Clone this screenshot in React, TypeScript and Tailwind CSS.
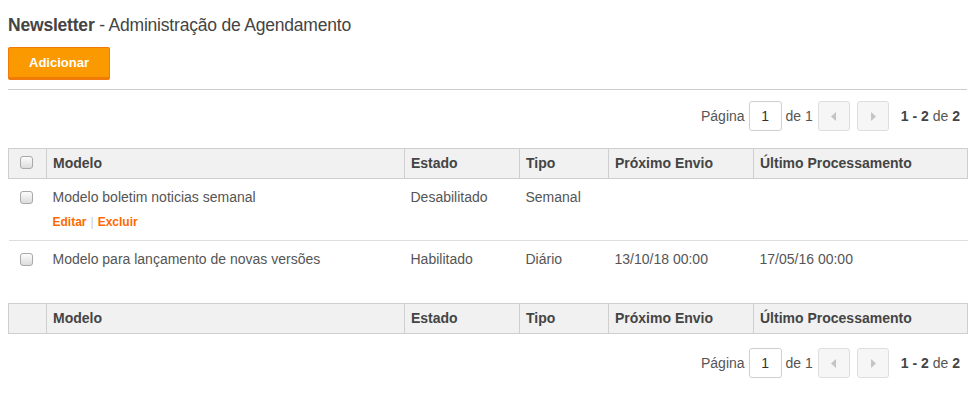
import React from 'react';

const font = { fontFamily: '"Liberation Sans", Arial, sans-serif' };

function Checkbox() {
  return (
    <span className="inline-block h-[13px] w-[13px] rounded-[3px] border border-[#a9a9a9] bg-gradient-to-b from-[#fcfcfc] to-[#dcdcdc]" />
  );
}

function Pager() {
  return (
    <div className="flex items-center justify-end pr-[7px] text-[14px] text-[#555]">
      <span>Página</span>
      <span className="ml-[4px] flex h-[30px] w-[33px] items-center justify-center rounded-[3px] border border-[#cfcfcf] bg-white text-[#333]">
        1
      </span>
      <span className="ml-[4px]">de 1</span>
      <button className="ml-[5px] flex h-[30px] w-[32px] items-center justify-center rounded-[3px] border border-[#dedede] bg-[#f6f6f6]">
        <svg width="6" height="9" viewBox="0 0 6 9"><path d="M5 0 L0 4.5 L5 9 Z" fill="#c4c4c4" /></svg>
      </button>
      <button className="ml-[7px] flex h-[30px] w-[32px] items-center justify-center rounded-[3px] border border-[#dedede] bg-[#f6f6f6]">
        <svg width="6" height="9" viewBox="0 0 6 9"><path d="M1 0 L6 4.5 L1 9 Z" fill="#c4c4c4" /></svg>
      </button>
      <span className="ml-[12px]">
        <b className="text-[#444]">1 - 2</b> de <b className="text-[#444]">2</b>
      </span>
    </div>
  );
}

const cols = [
  { label: 'Modelo', w: 'w-[358px]' },
  { label: 'Estado', w: 'w-[115px]' },
  { label: 'Tipo', w: 'w-[89px]' },
  { label: 'Próximo Envio', w: 'w-[145px]' },
  { label: 'Último Processamento', w: 'w-[214px]' },
];

function HeadRow({ check }: { check: boolean }) {
  return (
    <tr className="h-[30px] bg-[#f1f1f1] text-left text-[14px] font-bold text-[#444]">
      <th className="w-[38px] border border-[#cfcfcf] py-0 pr-0 pl-[11px] text-left align-middle">
        {check && <span className="relative top-[1px]"><Checkbox /></span>}
      </th>
      {cols.map((c) => (
        <th key={c.label} className={`${c.w} border border-[#cfcfcf] px-[6px] py-0 align-middle`}>
          {c.label}
        </th>
      ))}
    </tr>
  );
}

const rows = [
  { modelo: 'Modelo boletim noticias semanal', estado: 'Desabilitado', tipo: 'Semanal', prox: '', ult: '', actions: true },
  { modelo: 'Modelo para lançamento de novas versões', estado: 'Habilitado', tipo: 'Diário', prox: '13/10/18 00:00', ult: '17/05/16 00:00', actions: false },
];

export default function App() {
  return (
    <div className="min-h-[401px] bg-white px-[8px] pt-[13px]" style={font}>
      <h1 className="text-[17.5px] leading-[24px] tracking-[-0.2px] text-[#444]">
        <b>Newsletter</b> - Administração de Agendamento
      </h1>
      <button className="mt-[10px] h-[33px] w-[102px] rounded-[2px] border border-b-[3px] border-[#f07a0a] bg-[#fb9900] text-[13px] font-bold text-white">
        Adicionar
      </button>
      <hr className="mt-[9px] border-t border-[#cccccc]" />
      <div className="mt-[11px]">
        <Pager />
      </div>
      <table className="mt-[17px] w-[959px] table-fixed border-collapse text-[14px] text-[#555]">
        <thead>
          <HeadRow check />
        </thead>
        <tbody>
          {rows.map((r, i) => (
            <tr key={i} className={i === 0 ? 'border-b border-[#dddddd]' : ''}>
              <td className="pt-[12px] pr-0 pb-0 pl-[11px] text-left align-top leading-none">
                <Checkbox />
              </td>
              <td className={`px-[6px] pt-[8px] align-top ${i === 0 ? 'pb-[10px]' : 'pb-[11px]'}`}>
                <div className="leading-[20px]">{r.modelo}</div>
                <div className={`mt-[7px] h-[16px] text-[12px] font-bold leading-[16px] ${r.actions ? '' : 'invisible'}`}>
                  <a className="text-[#ff6a00]">Editar</a>
                  <span className="mx-[4px] font-normal text-[#cccccc]">|</span>
                  <a className="text-[#ff6a00]">Excluir</a>
                </div>
              </td>
              <td className="px-[6px] pt-[8px] align-top leading-[20px]">{r.estado}</td>
              <td className="px-[6px] pt-[8px] align-top leading-[20px]">{r.tipo}</td>
              <td className="px-[6px] pt-[8px] align-top leading-[20px]">{r.prox}</td>
              <td className="px-[6px] pt-[8px] align-top leading-[20px]">{r.ult}</td>
            </tr>
          ))}
        </tbody>
        <tfoot>
          <HeadRow check={false} />
        </tfoot>
      </table>
      <div className="mt-[14px]">
        <Pager />
      </div>
    </div>
  );
}
